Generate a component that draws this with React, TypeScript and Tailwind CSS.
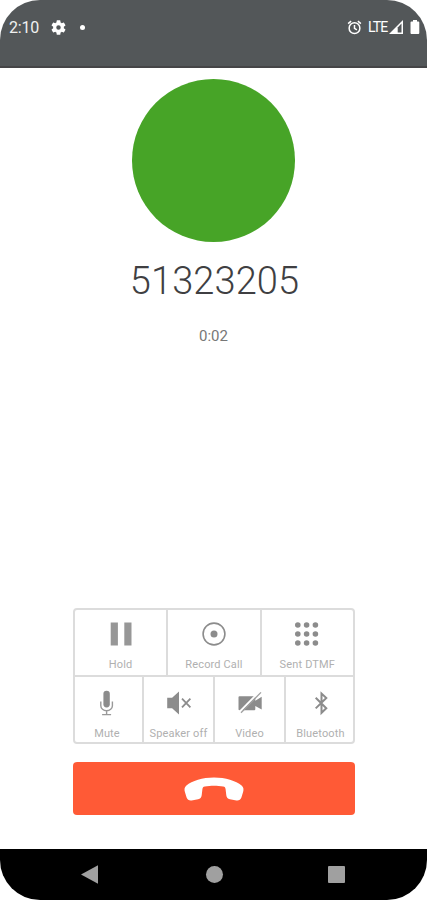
import type { ReactNode } from "react";
import clsx from "clsx";

type Action = {
  label: string;
  icon: ReactNode;
};

const PauseIcon = () => (
  <svg className="w-6 h-6" viewBox="0 0 24 24" fill="#979797">
    <path d="M1.7 0.4h7.2v23.2H1.7zM15.3 0.4h7.2v23.2h-7.2z" />
  </svg>
);

const RecordIcon = () => (
  <svg className="w-6 h-6" viewBox="0 0 24 24">
    <circle cx="12" cy="12" r="10.9" fill="none" stroke="#8c8c8c" strokeWidth="1.6" />
    <circle cx="12" cy="12" r="3.5" fill="#8c8c8c" />
  </svg>
);

const DialpadIcon = () => (
  <svg className="w-6 h-6" viewBox="0 0 24 24" fill="#8c8c8c">
    {[3, 12, 21].map((y) =>
      [2.8, 11.6, 20.4].map((x) => <circle key={`${x}-${y}`} cx={x} cy={y} r="2.8" />),
    )}
  </svg>
);

const MicIcon = () => (
  <svg className="w-[26px] h-[26px]" viewBox="0 0 26 26" fill="none" stroke="#999" strokeWidth="1.4">
    <rect x="9.4" y="0.8" width="6.4" height="16.6" rx="3.1" fill="#8c8c8c" stroke="none" />
    <path d="M6.8 11.5v4.2a5.8 5 0 0 0 11.6 0v-4.2M12.6 20.7v4M8.1 24.6h9" />
  </svg>
);

const SpeakerOffIcon = () => (
  <svg className="w-[26px] h-[26px]" viewBox="0 0 26 26">
    <path d="M1.2 7.8h4.9L13 1.5v23L6.1 18.2H1.2z" fill="#8c8c8c" />
    <path d="M16 8.7l8.4 8.6M24.4 8.7l-8.4 8.6" stroke="#8c8c8c" strokeWidth="1.8" />
  </svg>
);

const VideoOffIcon = () => (
  <svg className="w-[26px] h-[26px]" viewBox="0 0 26 26">
    <path
      d="M1.5 7.3a1 1 0 0 1 1-1h14.8a1 1 0 0 1 1 1v3.4l6.4-3.9v12.8l-6.4-3.7v3.3a1 1 0 0 1-1 1H2.5a1 1 0 0 1-1-1z"
      fill="#8c8c8c"
    />
    <path d="M3 21.4L22.4 1.6" stroke="#fff" strokeWidth="2" />
    <path d="M4 22.8L24 2.4" stroke="#a0a0a0" strokeWidth="1.3" />
  </svg>
);

const BluetoothIcon = () => (
  <svg className="w-[26px] h-[26px]" viewBox="0 0 26 26" fill="none" stroke="#8c8c8c" strokeWidth="2">
    <path d="M7.7 7.8l10.6 10.4L13.5 22.8V3.6l4.8 4.4L7.7 18.4" />
  </svg>
);

const topActions: Action[] = [
  { label: "Hold", icon: <PauseIcon /> },
  { label: "Record Call", icon: <RecordIcon /> },
  { label: "Sent DTMF", icon: <DialpadIcon /> },
];

const bottomActions: Action[] = [
  { label: "Mute", icon: <MicIcon /> },
  { label: "Speaker off", icon: <SpeakerOffIcon /> },
  { label: "Video", icon: <VideoOffIcon /> },
  { label: "Bluetooth", icon: <BluetoothIcon /> },
];

function StatusBar() {
  return (
    <header className="h-[68px] shrink-0 bg-[#535759] border-b-2 border-[#454547] pt-[17px]">
      <div className="flex h-5 items-center pl-[9px] pr-[7px] text-white">
        <span className="w-[31px] whitespace-nowrap pt-[2px] text-[16px] leading-5 tracking-[-0.2px] text-[#f0f0f0]">
          2:10
        </span>
        <svg className="ml-[11px] w-[15px] h-[15px]" viewBox="2 2 20 20" fill="#fff">
          <path d="M19.14 12.94a7.5 7.5 0 0 0 0-1.88l2.03-1.58a.5.5 0 0 0 .12-.61l-1.92-3.32a.5.5 0 0 0-.59-.22l-2.39.96a7 7 0 0 0-1.62-.94l-.36-2.54a.5.5 0 0 0-.48-.41h-3.84a.5.5 0 0 0-.47.41l-.36 2.54c-.59.24-1.13.57-1.62.94l-2.39-.96a.5.5 0 0 0-.59.22L2.74 8.87a.5.5 0 0 0 .12.61l2.03 1.58a7.5 7.5 0 0 0 0 1.88l-2.03 1.58a.5.5 0 0 0-.12.61l1.92 3.32c.12.22.37.29.59.22l2.39-.96c.5.38 1.03.7 1.62.94l.36 2.54c.05.24.24.41.48.41h3.84c.24 0 .44-.17.47-.41l.36-2.54a7 7 0 0 0 1.62-.94l2.39.96c.22.08.47 0 .59-.22l1.92-3.32a.5.5 0 0 0-.12-.61zM12 15a3 3 0 1 1 0-6 3 3 0 0 1 0 6z" />
        </svg>
        <span className="ml-[14px] h-[5px] w-[5px] rounded-full bg-white" />

        <svg className="ml-auto w-[15px] h-[15px]" viewBox="0 0 24 24" fill="none" stroke="#fff" strokeWidth="2.4">
          <circle cx="12" cy="13" r="8.6" />
          <path d="M12 8v5.5l3.8 2.3M1.8 5.8l4.8-4M22.2 5.8l-4.8-4" />
        </svg>
        <span className="ml-[6px] w-[19px] whitespace-nowrap text-[14px] leading-5 tracking-[-0.9px]">LTE</span>
        <svg className="ml-[2px] w-[14px] h-[14px]" viewBox="0 0 14 14">
          <path d="M0 14L14 0v14z" fill="#fff" />
          <path d="M8.7 12.6V7.4l3.8-3.8v9z" fill="#535759" />
        </svg>
        <svg className="ml-[7px] w-[10px] h-[14px]" viewBox="0 0 10 14" fill="#fff">
          <path d="M3 0h4v1.6h1.3a1 1 0 0 1 1 1V13a1 1 0 0 1-1 1H1.5a1 1 0 0 1-1-1V2.6a1 1 0 0 1 1-1H3z" />
        </svg>
      </div>
    </header>
  );
}

function ActionButton({ label, icon, className }: Action & { className: string }) {
  return (
    <button type="button" className={clsx("flex min-w-0 flex-col items-center bg-white", className)}>
      <span className="flex h-[26px] items-center">{icon}</span>
      <span className="mt-auto whitespace-nowrap text-[11px] leading-4 tracking-[0.15px] text-[#b0b0b0]">
        {label}
      </span>
    </button>
  );
}

function NavBar() {
  return (
    <nav className="flex h-[51px] shrink-0 justify-between bg-black pl-[80px] pr-[82px] pt-[16px]">
      <svg className="w-[18px] h-[19px]" viewBox="0 0 18 19" fill="#a0a0a0">
        <path d="M1 9.5L18 0.3v18.4z" />
      </svg>
      <span className="ml-[2px] mt-px h-[17px] w-[17px] rounded-full bg-[#a0a0a0]" />
      <span className="mt-px h-[17px] w-[17px] rounded-[1px] bg-[#a0a0a0]" />
    </nav>
  );
}

export default function App() {
  return (
    <div className="h-[900px] w-[427px] bg-white font-[Roboto,sans-serif]">
      <div className="flex h-full flex-col overflow-hidden rounded-[40px] bg-white">
        <StatusBar />

        <main className="flex flex-1 flex-col items-center">
          <div className="mt-[11px] h-[163px] w-[163px] rounded-full bg-[#47a427]" />
          <h1 className="ml-[2px] mt-[17px] text-[38px] font-light leading-[44px] tracking-[0.1px] text-[#3f3f42]">
            51323205
          </h1>
          <p className="mt-[24px] text-[15px] leading-[18px] text-[#777]">0:02</p>

          <div className="mb-[18px] ml-px mt-auto flex h-[136px] w-[282px] flex-col gap-[2px] overflow-hidden rounded-[4px] border-2 border-[#dcdcdc] bg-[#dcdcdc]">
            <div className="grid h-[65px] grid-cols-3 gap-[2px]">
              {topActions.map((a) => (
                <ActionButton key={a.label} {...a} className="pt-[11px] pb-[2px]" />
              ))}
            </div>
            <div className="grid h-[65px] grid-cols-[67px_69px_69px_67px] gap-[2px]">
              {bottomActions.map((a) => (
                <ActionButton key={a.label} {...a} className="pt-[13px] first:pr-[3px] last:pl-[2px]" />
              ))}
            </div>
          </div>

          <button
            type="button"
            aria-label="End call"
            className="mb-[34px] ml-px flex h-[53px] w-[282px] items-center justify-center rounded-[4px] bg-[#ff5a36]"
          >
            <svg className="h-[24px] w-[60px]" viewBox="0 0 60 24" fill="#fff">
              <path d="M30 .5C18.5.5 8 4 2.4 8.5.3 10.2.2 12.5.9 15l1.7 5.5c.8 2.400 2.600 3.300 5 3l6.500-1.200c2.200-.5 3.300-1.800 3.600-4l.7-6c.2-1.700.8-2.500 2.400-2.800C23.500 9 27 8.700 30 8.700s6.500.3 9.200.8c1.600.3 2.200 1.100 2.400 2.800l.7 6c.3 2.200 1.400 3.500 3.600 4l6.500 1.200c2.400.3 4.200-.6 5-3L59.100 15c.7-2.500.6-4.800-1.500-6.500C52 4 41.500.5 30 .5z" />
            </svg>
          </button>
        </main>

        <NavBar />
      </div>
    </div>
  );
}
